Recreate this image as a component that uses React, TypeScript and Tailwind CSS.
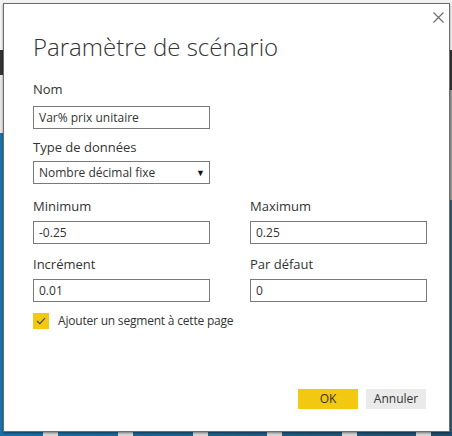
import React from "react";

const font = { fontFamily: '"Segoe UI", "Open Sans", "Noto Sans", sans-serif' };

function Field({ label, value, tight = false, className = "" }: { label: string; value: string; tight?: boolean; className?: string }) {
  return (
    <div className={`flex flex-col ${className}`}>
      <label className="text-[13px] leading-[18px] text-[#333]">{label}</label>
      <div
        className={`${tight ? "mt-[6px]" : "mt-[8px]"} h-[23px] w-[177px] border border-[#7a7a7a] bg-white px-[5px] text-[12px] leading-[21px] text-[#333]`}
      >
        {value}
      </div>
    </div>
  );
}

function BottomStrip() {
  const tabs = [43, 118, 193, 267, 342, 416];
  return (
    <div className="flex h-[4px] w-[452px] bg-gradient-to-r from-[#1670a8] to-[#1d4f70]">
      {tabs.map((x, i) => (
        <div
          key={x}
          className="h-[4px] w-[15px] bg-[#d6d6d6]"
          style={{ marginLeft: i === 0 ? x : x - tabs[i - 1] - 15 }}
        />
      ))}
    </div>
  );
}

export default function App() {
  return (
    <div className="flex h-[436px] w-[452px] flex-col overflow-hidden bg-[#f3f3f3]" style={font}>
      <div className="h-[3px]" />
      <div className="flex h-[429px]">
        <div className="flex w-[3px] flex-col">
          <div className="h-[47px] bg-[#f3f3f3]" />
          <div className="h-[25px] bg-[#333]" />
          <div className="h-[58px] bg-[#e6e6e6]" />
          <div className="flex-1 bg-[#1a74ab]" />
        </div>

        <div className="relative flex w-[447px] flex-col border border-[#6d6d6d] bg-white pl-[29px] pr-[23px] shadow-[0_1px_2px_rgba(0,0,0,0.45)]">
          <button className="absolute right-[5px] top-[7px] flex h-[12px] w-[12px] items-center justify-center text-[#666]">
            <svg width="11" height="11" viewBox="0 0 11 11" fill="none" stroke="#6a6a6a" strokeWidth="1.1">
              <path d="M0.5 0.5 L10.5 10.5 M10.5 0.5 L0.5 10.5" />
            </svg>
          </button>

          <h1 className="mt-[28px] text-[24px] font-light leading-[30px] text-[#333]">Paramètre de scénario</h1>

          <Field label="Nom" value="Var% prix unitaire" className="mt-[18px]" />

          <div className="mt-[9px] flex flex-col">
            <label className="text-[13px] leading-[18px] text-[#333]">Type de données</label>
            <div className="mt-[5px] flex h-[23px] w-[177px] items-center justify-between border border-[#7a7a7a] bg-white pl-[5px] pr-[4px] text-[12px] text-[#333]">
              <span>Nombre décimal fixe</span>
              <span className="text-[9px] text-[#111]">▼</span>
            </div>
          </div>

          <div className="mt-[13px] flex gap-[40px]">
            <Field label="Minimum" value="-0.25" tight />
            <Field label="Maximum" value="0.25" tight />
          </div>

          <div className="mt-[11px] flex gap-[40px]">
            <Field label="Incrément" value="0.01" tight />
            <Field label="Par défaut" value="0" tight />
          </div>

          <div className="mt-[10px] flex items-center gap-[9px]">
            <div className="flex h-[16px] w-[16px] items-center justify-center bg-[#f2c811]">
              <svg width="10" height="8" viewBox="0 0 10 8" fill="none" stroke="#4a4a4a" strokeWidth="1.2">
                <path d="M1 4 L3.8 6.6 L9 1.2" />
              </svg>
            </div>
            <span className="text-[12px] tracking-[-0.2px] text-[#333]">Ajouter un segment à cette page</span>
          </div>

          <div className="mt-[59px] flex justify-end gap-[8px]">
            <button className="h-[20px] w-[60px] bg-[#f2c811] text-[12px] text-[#333]">OK</button>
            <button className="h-[20px] w-[60px] bg-[#eaeaea] text-[12px] text-[#333]">Annuler</button>
          </div>
        </div>

        <div className="flex w-[2px] flex-col">
          <div className="h-[47px] bg-[#f3f3f3]" />
          <div className="h-[40px] bg-[#333]" />
          <div className="h-[110px] bg-[#9a9a9a]" />
          <div className="flex-1 bg-[#2d5c7a]" />
        </div>
      </div>
      <BottomStrip />
    </div>
  );
}
